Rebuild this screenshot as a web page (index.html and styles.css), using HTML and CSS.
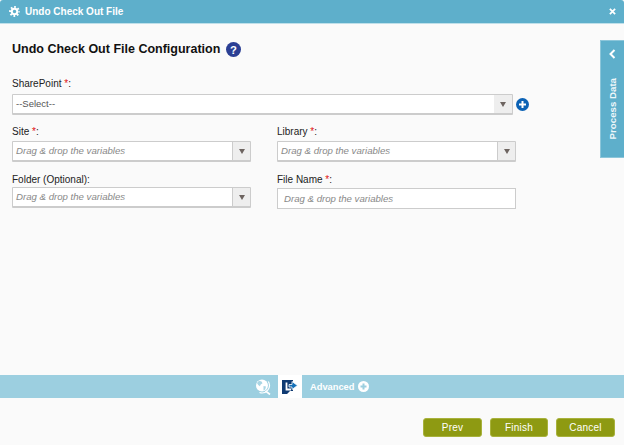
FILE: index.html
```html
<!DOCTYPE html>
<html lang="en">
<head>
<meta charset="utf-8">
<title>Undo Check Out File</title>
<link rel="stylesheet" href="styles.css">
</head>
<body>
<div class="dialog">
  <header class="titlebar">
    <svg class="gear" viewBox="0 0 12 12" width="11" height="11"><circle cx="6" cy="6" r="3" fill="none" stroke="#fff" stroke-width="2.200"/><circle cx="6" cy="6" r="4.800" fill="none" stroke="#fff" stroke-width="2.200" stroke-dasharray="1.900 1.870" stroke-dashoffset=".95"/></svg>
    <span class="titlebar-text">Undo Check Out File</span>
    <svg class="close" viewBox="0 0 8 8" width="7" height="7"><path stroke="#fff" stroke-width="2" d="M1 1l6 6M7 1L1 7"/></svg>
  </header>
  <main class="content">
    <h1 class="heading">Undo Check Out File Configuration
      <svg class="help" viewBox="0 0 16 16" width="15" height="15"><circle cx="8" cy="8" r="8" fill="#2b3f94"/><text x="8" y="12.500" text-anchor="middle" class="help-mark">?</text></svg>
    </h1>
    <div class="field sharepoint">
      <label class="label label-loose">SharePoint <span class="req">*</span>:</label>
      <div class="sp-row">
        <div class="select wide"><span class="value">--Select--</span><span class="arrow soft"><i class="tri"></i></span></div>
        <svg class="add" viewBox="0 0 13 13" width="13" height="13"><circle cx="6.500" cy="6.500" r="6.500" fill="#0b62b5"/><path stroke="#fff" stroke-width="2" d="M3 6.500h7M6.500 3v7"/></svg>
      </div>
    </div>
    <div class="grid">
      <div class="field">
        <label class="label">Site <span class="req">*</span>:</label>
        <div class="select"><span class="ph">Drag &amp; drop the variables</span><span class="arrow"><i class="tri"></i></span></div>
      </div>
      <div class="field">
        <label class="label">Library <span class="req">*</span>:</label>
        <div class="select"><span class="ph">Drag &amp; drop the variables</span><span class="arrow"><i class="tri"></i></span></div>
      </div>
      <div class="field">
        <label class="label label-tight">Folder (Optional):</label>
        <div class="select"><span class="ph">Drag &amp; drop the variables</span><span class="arrow"><i class="tri"></i></span></div>
      </div>
      <div class="field">
        <label class="label label-tight">File Name <span class="req">*</span>:</label>
        <div class="input"><span class="ph">Drag &amp; drop the variables</span></div>
      </div>
    </div>
    <aside class="process">
      <svg class="chev" viewBox="0 0 7 10" width="7" height="10"><path fill="none" stroke="#fff" stroke-width="2" d="M5.500 1L1.500 5l4 4"/></svg>
      <span class="process-text">Process Data</span>
    </aside>
  </main>
  <div class="tabs">
    <svg class="globe" viewBox="0 0 16 16" width="16" height="16"><circle cx="7" cy="6.500" r="6" fill="#fff"/><path fill="#a9d5e4" d="M4 1.800l2.500.7 1 1.800-1.800 1.200-.8 1.800-1.700-1.300-1.200-2zM8.500 7l2.500.4-.8 3-1.700 1.200z"/><path fill="none" stroke="#fff" stroke-width="1.200" d="M13.300 2.500a7.500 7.500 0 0 1-8.800 11"/><path stroke="#fff" stroke-width="1.600" d="M10.500 12l4.500 3.500"/></svg>
    <div class="tab-active">
      <svg viewBox="0 0 16 14" width="16" height="14"><path fill="#0f3a72" d="M0 0h11v11H8l-3 3H0z"/><path fill="none" stroke="#fff" stroke-width="1.800" d="M4.500 2.500v7H9"/><path fill="#1470b8" stroke="#fff" stroke-width=".8" d="M7 4.500h3V1.500l5.500 4-5.500 4V7H7z"/></svg>
    </div>
    <span class="adv">Advanced</span>
    <svg class="adv-plus" viewBox="0 0 11 11" width="11" height="11"><circle cx="5.500" cy="5.500" r="5.500" fill="#fff"/><path stroke="#9ccfe0" stroke-width="2" d="M2.500 5.500h6M5.500 2.500v6"/></svg>
  </div>
  <footer class="footer">
    <button class="btn">Prev</button>
    <button class="btn btn-narrow">Finish</button>
    <button class="btn">Cancel</button>
  </footer>
</div>
</body>
</html>
```
FILE: styles.css
```css
* { box-sizing: border-box; }
html, body { margin: 0; padding: 0; }
body { width: 624px; height: 445px; overflow: hidden; font-family: "Liberation Sans", Arial, sans-serif; background: #fff; }
.dialog { width: 624px; height: 445px; display: flex; flex-direction: column; background: #fafafa; }
.titlebar { height: 24px; flex: none; background: #5eafcb; border-bottom: 1px solid #bfe0ea; border-radius: 3px 3px 0 0; display: flex; align-items: center; padding: 0 8px 0 9px; color: #fff; }
.gear { flex: none; }
.titlebar-text { margin-left: 5px; font-size: 10px; font-weight: bold; }
.close { margin-left: auto; }
.content { position: relative; flex: 1; padding: 17px 12px 0; }
.heading { margin: 0; height: 16px; display: flex; align-items: center; gap: 6px; font-size: 12.500px; line-height: 16px; font-weight: bold; color: #111; }
.help { flex: none; }
.help-mark { font: bold 12px "Liberation Sans", sans-serif; fill: #fff; }
.field { display: flex; flex-direction: column; }
.sharepoint { margin-top: 20px; }
.label { height: 14px; font-size: 10px; line-height: 14px; color: #222; margin-bottom: 2px; }
.label-loose { margin-bottom: 3px; }
.label-tight { margin-bottom: 0; }
.req { color: #e01010; }
.sp-row { display: flex; align-items: center; gap: 3px; }
.select { width: 239px; height: 21px; display: flex; align-items: stretch; background: #fff; border: 1px solid #ccc; border-bottom-width: 2px; border-radius: 1px; }
.select.wide { width: 501px; }
.value { flex: 1; padding-left: 3px; font-size: 9.500px; line-height: 18px; color: #555; }
.ph { flex: 1; padding-left: 3px; font-size: 9.650px; line-height: 18px; font-style: italic; color: #888; }
.arrow { flex: none; width: 18px; background: #eee; border-left: 1px solid #ccc; display: flex; align-items: center; justify-content: center; }
.arrow.soft { border-left: 0; width: 18px; }
.tri { width: 0; height: 0; border-left: 3px solid transparent; border-right: 3px solid transparent; border-top: 5px solid #6d6460; }
.add { flex: none; }
.grid { width: 504px; margin-top: 10px; display: grid; grid-template-columns: 239px 239px; column-gap: 26px; row-gap: 11px; }
.input { width: 239px; height: 21px; margin-top: 1px; background: #fff; border: 1px solid #ccc; padding-left: 6px; display: flex; align-items: center; }
.input .ph { line-height: 19px; padding-left: 0; }
.process { position: absolute; top: 16px; right: 0; width: 24px; height: 118px; background: #5eafcb; border: 1px solid #8cc6da; border-right: 0; display: flex; flex-direction: column; align-items: center; padding-top: 8px; color: #fff; }
.process-text { margin-top: 19px; font-size: 9.700px; font-weight: bold; line-height: 12px; writing-mode: vertical-rl; transform: rotate(180deg); color: #eef7fa; }
.tabs { height: 23px; flex: none; background: #9ccfe0; display: flex; align-items: center; padding-left: 255px; }
.globe { flex: none; }
.tab-active { width: 24px; height: 23px; margin-left: 7px; background: #fff; display: flex; align-items: center; justify-content: center; }
.adv { margin-left: 8px; font-size: 9.300px; font-weight: bold; color: #fff; }
.adv-plus { margin-left: 4px; }
.footer { height: 47px; flex: none; background: #fafafa; display: flex; justify-content: flex-end; align-items: flex-start; gap: 8px; padding: 20px 9px 0 0; }
.btn { width: 59px; height: 19px; padding: 0; background: #8e9a12; border: 1px solid #a8b23c; border-radius: 3px; color: #fff; font-family: "Liberation Sans", Arial, sans-serif; font-size: 10px; letter-spacing: .2px; line-height: 17px; }
.btn-narrow { width: 58px; }
```
